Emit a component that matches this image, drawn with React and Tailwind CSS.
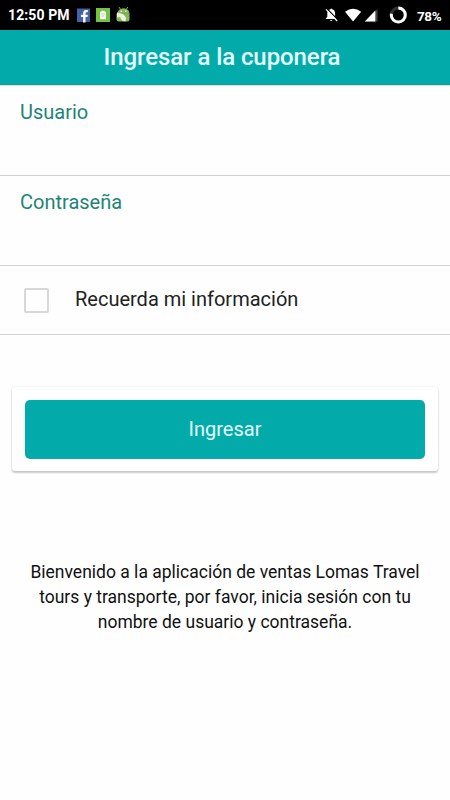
import { useState } from "react";

function StatusBar() {
    return (
        <div className="flex h-[30px] items-center bg-black text-white">
            <span className="ml-2 w-[69px] whitespace-nowrap text-[14px] font-bold leading-[30px] tracking-[0.1px]">12:50 PM</span>
            <svg className="h-[30px] w-[56px]" viewBox="77 0 56 30">
                {/* facebook */}
                <rect x="77" y="8.5" width="13" height="13.5" fill="#4562a5" />
                <path d="M83.100 22.500v-5.500h-2.100v-2.200h2.100v-1.300c0-2.300 1.300-3.400 3.200-3.400h1.500v2.200h-1c-1 0-1.300.4-1.300 1.200v1.300h2.300l-.3 2.200h-2v5.500z" fill="#fff" />
                {/* battery */}
                <rect x="96" y="8" width="14" height="14" fill="#72c244" />
                <path d="M101.500 10.800h3v1h1.500v7.400h-6v-7.400h1.500z" fill="#fff" />
                <path d="M101.300 14h3.400M101.300 16h3.400" stroke="#a5d98a" strokeWidth="1" />
                {/* android */}
                <path d="M119 7l1.800 2.800M127.800 7L126 9.800" stroke="#7fae4f" strokeWidth="1" />
                <path d="M117.500 13.700a6 5.500 0 0 1 12 0z" fill="#86b857" />
                <path d="M116.500 13.500h13v6q0 2-2 2h-8.500q-2.500 0-2.500-2z" fill="#86b857" />
                <path d="M117 12.500l6 1.500 3 3.500-.5 4-3.500-1-2-3.500-3 .5z" fill="#e9f3e0" />
                <circle cx="121.200" cy="11.300" r=".7" fill="#fff" />
                <circle cx="125.800" cy="11.300" r=".7" fill="#fff" />
            </svg>
            <svg className="ml-auto h-[30px] w-[84px]" viewBox="324 0 84 30">
                {/* muted bell */}
                <path d="M330.500 9.200q.8-1.400 1.600 0 3 .8 3 4.300v3.300l1.500 1.700v.6h-10.800v-.6l1.500-1.700v-3.300q0-3.500 3.200-4.300z" fill="#fff" />
                <path d="M329.900 20h2.600q-1.300 2.200-2.600 0z" fill="#fff" />
                <path d="M326.800 8.500l11.200 11.600" stroke="#000" strokeWidth="1.200" />
                <path d="M326 9.400l11.200 11.600" stroke="#fff" strokeWidth="1.200" />
                {/* wifi */}
                <path d="M345 11.800q8-6 16.200 0L353.100 21.500z" fill="#fff" />
                {/* signal */}
                <path d="M377.500 9v12.500H365z" fill="#444" />
                <path d="M375.300 10.500v11H364.800z" fill="#fff" />
                {/* battery ring */}
                <circle cx="398.300" cy="15" r="7" fill="none" stroke="#333" strokeWidth="3" />
                <circle cx="398.300" cy="15" r="7" fill="none" stroke="#fff" strokeWidth="3" pathLength="100" strokeDasharray="78 22" transform="rotate(-90 398.300 15)" />
            </svg>
            <span className="ml-[9px] w-[33px] whitespace-nowrap pt-[2px] text-[13.500px] font-bold leading-[28px] tracking-[-0.4px]">78%</span>
        </div>
    );
}

function Field({ label, type, value, onChange }) {
    return (
        <label className="block h-[90px] border-b border-[#d2d2d2] px-5 pt-[14px]">
            <span className="block text-[20px] leading-6 text-[#1c8577]">{label}</span>
            <input
                type={type}
                value={value}
                onChange={(e) => onChange(e.target.value)}
                className="mt-2 h-9 w-full text-[20px] outline-none"
            />
        </label>
    );
}

export default function App() {
    const [usuario, setUsuario] = useState("");
    const [contrasena, setContrasena] = useState("");
    const [recordar, setRecordar] = useState(false);

    return (
        <div className="min-h-[800px] bg-[#fefefe] font-['Roboto',sans-serif]">
            <StatusBar />

            <header className="flex h-[55px] items-center justify-center border-b border-[#159c99] bg-[#02aaa9] pr-[6px] shadow-[0_1px_1px_rgba(0,0,0,0.12)]">
                <h1 className="text-[24px] font-medium leading-[54px] tracking-[-0.08px] text-[#e4ffff]">Ingresar a la cuponera</h1>
            </header>

            <form onSubmit={(e) => e.preventDefault()}>
                <div className="pt-[1px]">
                    <Field label="Usuario" type="text" value={usuario} onChange={setUsuario} />
                    <Field label="Contraseña" type="password" value={contrasena} onChange={setContrasena} />
                    <label className="flex h-[69px] items-center border-b border-[#d2d2d2] pl-6">
                        <input
                            type="checkbox"
                            checked={recordar}
                            onChange={(e) => setRecordar(e.target.checked)}
                            className="size-[25px] appearance-none rounded-[2px] border-[2px] border-[#d8d8d8] checked:bg-[#02aaa9]"
                        />
                        <span className="ml-[26px] pb-[2px] text-[20px] leading-6 text-[#222]">Recuerda mi información</span>
                    </label>
                </div>

                {/* Submit card */}
                <div className="mx-3 mt-[52px] rounded-[3px] bg-white px-[13px] pt-[13px] pb-[12px] shadow-[0_2px_2px_rgba(0,0,0,0.2),0_0_2px_rgba(0,0,0,0.12)]">
                    <button type="submit" className="block h-[59px] w-full rounded-[5px] bg-[#02aaa9] pb-[2px] text-[20px] text-[#e4ffff]">
                        Ingresar
                    </button>
                </div>
            </form>

            <p className="mt-[89px] text-center text-[17.500px] leading-[25px] text-[#111]">
                Bienvenido a la aplicación de ventas Lomas Travel<br />
                tours y transporte, por favor, inicia sesión con tu<br />
                nombre de usuario y contraseña.
            </p>
        </div>
    );
}
